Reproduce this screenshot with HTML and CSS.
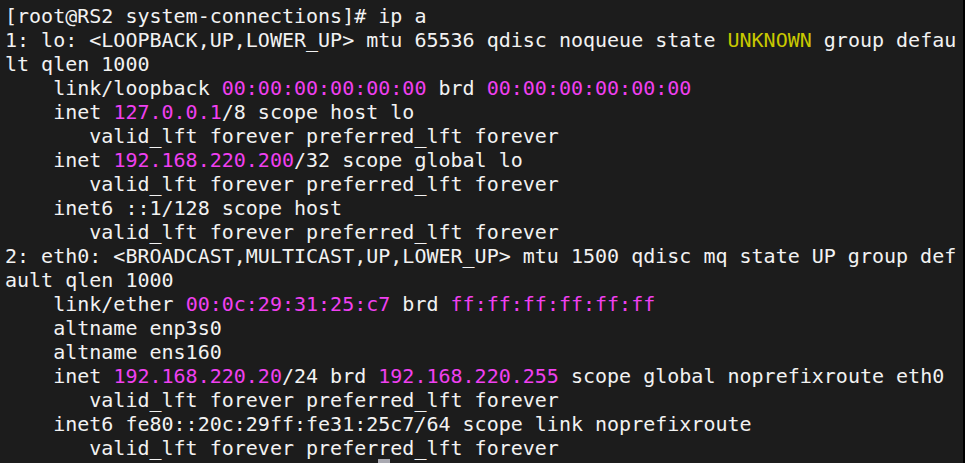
FILE: index.html
```html
<!DOCTYPE html>
<html>
<head>
<meta charset="utf-8">
<link rel="stylesheet" href="styles.css">
</head>
<body>
<div class="term">
<div class="out">
<div class="ln">[root@RS2 system-connections]# ip a</div>
<div class="ln">1: lo: &lt;LOOPBACK,UP,LOWER_UP&gt; mtu 65536 qdisc noqueue state <span class="y">UNKNOWN</span> group defau</div>
<div class="ln">lt qlen 1000</div>
<div class="ln">    link/loopback <span class="m">00:00:00:00:00:00</span> brd <span class="m">00:00:00:00:00:00</span></div>
<div class="ln">    inet <span class="m">127.0.0.1</span>/8 scope host lo</div>
<div class="ln">       valid_lft forever preferred_lft forever</div>
<div class="ln">    inet <span class="m">192.168.220.200</span>/32 scope global lo</div>
<div class="ln">       valid_lft forever preferred_lft forever</div>
<div class="ln">    inet6 ::1/128 scope host</div>
<div class="ln">       valid_lft forever preferred_lft forever</div>
<div class="ln">2: eth0: &lt;BROADCAST,MULTICAST,UP,LOWER_UP&gt; mtu 1500 qdisc mq state UP group def</div>
<div class="ln">ault qlen 1000</div>
<div class="ln">    link/ether <span class="m">00:0c:29:31:25:c7</span> brd <span class="m">ff:ff:ff:ff:ff:ff</span></div>
<div class="ln">    altname enp3s0</div>
<div class="ln">    altname ens160</div>
<div class="ln">    inet <span class="m">192.168.220.20</span>/24 brd <span class="m">192.168.220.255</span> scope global noprefixroute eth0</div>
<div class="ln">       valid_lft forever preferred_lft forever</div>
<div class="ln">    inet6 fe80::20c:29ff:fe31:25c7/64 scope link noprefixroute</div>
<div class="ln">       valid_lft forever preferred_lft forever</div>
</div>
<span class="cursor"></span>
</div>
</body>
</html>
```
FILE: styles.css
```css
html, body {
  margin: 0;
  padding: 0;
  background: #000;
  height: 100%;
  overflow: hidden;
}
.term {
  position: relative;
  width: 963px;
  height: 463px;
  background: #1c1c1c;
  overflow: hidden;
}
.out {
  padding: 4px 0 0 5px;
  font-family: "DejaVu Sans Mono", monospace;
  font-size: 20px;
  line-height: 24px;
  color: #f2f2f2;
}
.ln {
  white-space: pre;
  height: 24px;
}
.m { color: #f040f0; }
.y { color: #c8c800; }
.cursor {
  position: absolute;
  left: 378px;
  top: 459px;
  width: 12px;
  height: 4px;
  background: #a8a8b0;
}
```
